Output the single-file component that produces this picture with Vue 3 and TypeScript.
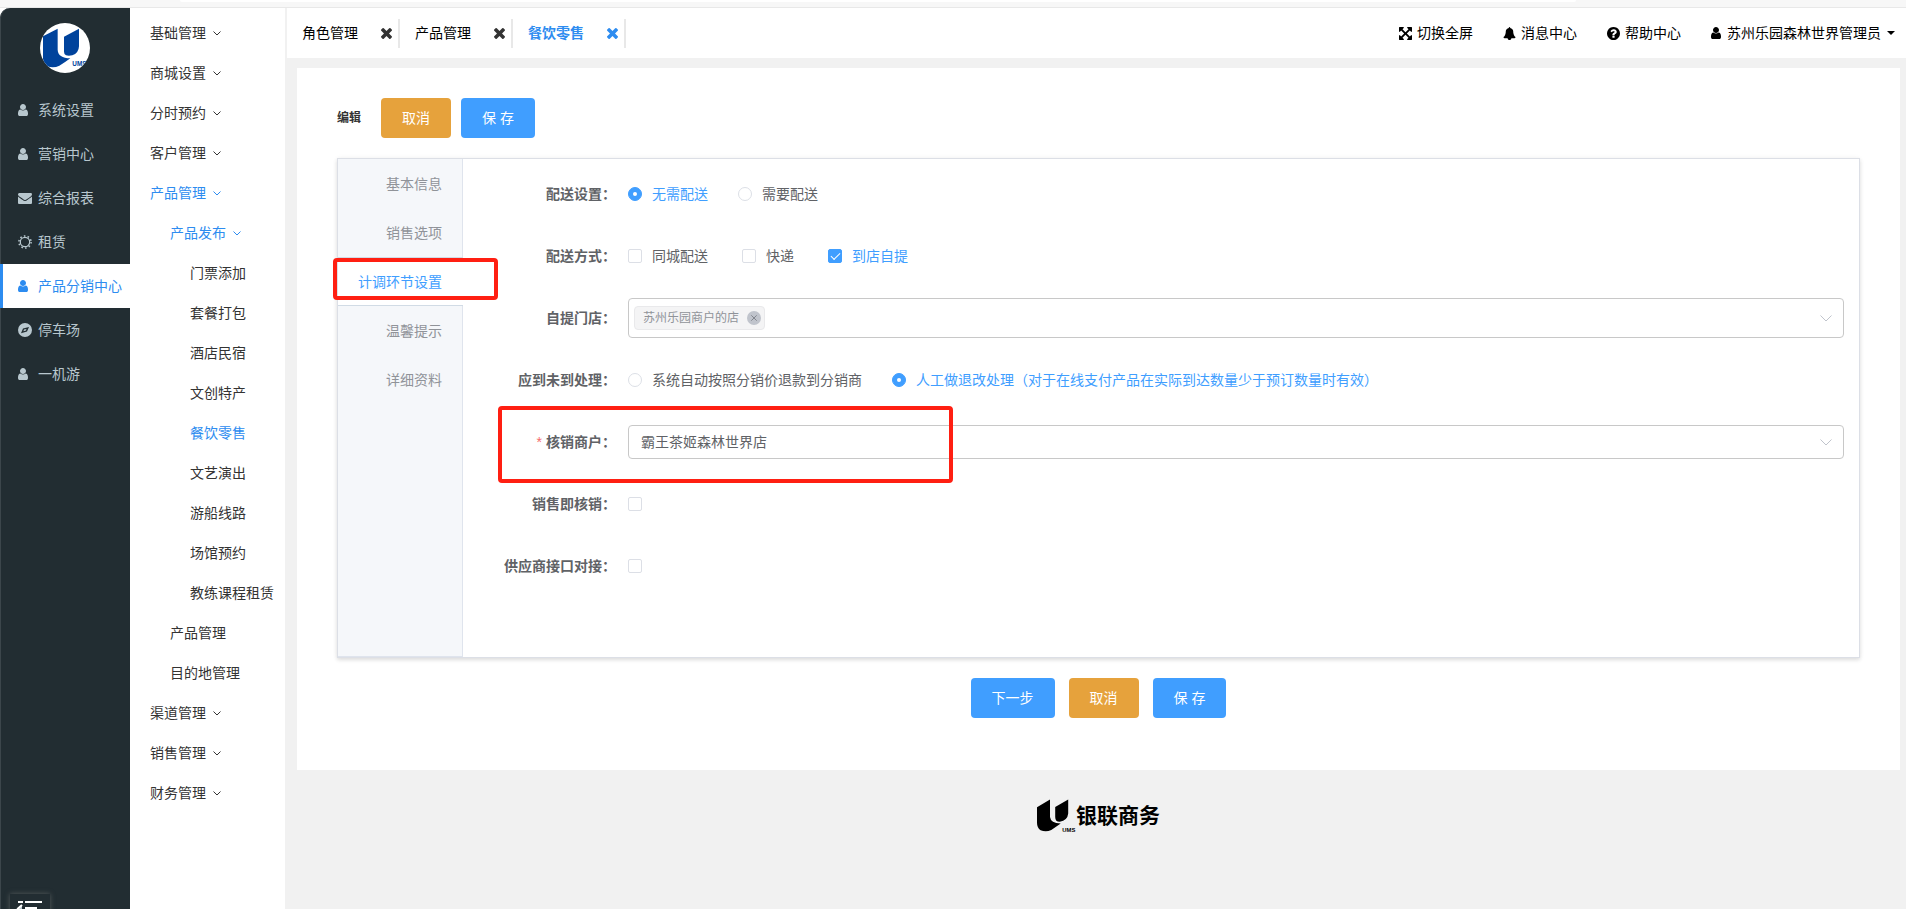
<script setup lang="ts">
import { ref } from 'vue'

interface MainItem { label: string; icon: 'user' | 'mail' | 'sun' | 'compass'; active?: boolean }
interface SubItem { label: string; level: 1 | 2 | 3; open?: boolean; active?: boolean }

const mainMenu: MainItem[] = [
  { label: '系统设置', icon: 'user' },
  { label: '营销中心', icon: 'user' },
  { label: '综合报表', icon: 'mail' },
  { label: '租赁', icon: 'sun' },
  { label: '产品分销中心', icon: 'user', active: true },
  { label: '停车场', icon: 'compass' },
  { label: '一机游', icon: 'user' },
]

const subMenu: SubItem[] = [
  { label: '基础管理', level: 1, open: true },
  { label: '商城设置', level: 1, open: true },
  { label: '分时预约', level: 1, open: true },
  { label: '客户管理', level: 1, open: true },
  { label: '产品管理', level: 1, open: true, active: true },
  { label: '产品发布', level: 2, open: true, active: true },
  { label: '门票添加', level: 3 },
  { label: '套餐打包', level: 3 },
  { label: '酒店民宿', level: 3 },
  { label: '文创特产', level: 3 },
  { label: '餐饮零售', level: 3, active: true },
  { label: '文艺演出', level: 3 },
  { label: '游船线路', level: 3 },
  { label: '场馆预约', level: 3 },
  { label: '教练课程租赁', level: 3 },
  { label: '产品管理', level: 2 },
  { label: '目的地管理', level: 2 },
  { label: '渠道管理', level: 1, open: true },
  { label: '销售管理', level: 1, open: true },
  { label: '财务管理', level: 1, open: true },
]

const pageTabs = ['角色管理', '产品管理', '餐饮零售']
const activePage = ref('餐饮零售')
const sections = ['基本信息', '销售选项', '计调环节设置', '温馨提示', '详细资料']
const activeSection = ref('计调环节设置')

const delivery = ref('none')
const methods = ref<string[]>(['到店自提'])
const methodOptions = ['同城配送', '快递', '到店自提']
const noShow = ref('manual')
const merchant = ref('霸王茶姬森林世界店')
const verifyOnSale = ref(false)
const supplierApi = ref(false)

const userPath = 'M1280 1399q0 109-62.5 187t-150.5 78h-854q-88 0-150.5-78t-62.5-187q0-85 8.5-160.5t31.5-152 58.5-131 94-89 134.5-34.5q131 128 313 128t313-128q76 0 134.5 34.5t94 89 58.5 131 31.5 152 8.5 160.5zm-256-887q0 159-112.5 271.5t-271.5 112.5-271.5-112.5-112.5-271.5 112.5-271.5 271.5-112.5 271.5 112.5 112.5 271.5z'
</script>

<template>
  <div class="app">
    <div class="chrome"><div class="address"></div></div>
    <div class="shell">
      <aside class="sidebar">
        <svg class="avatar" viewBox="0 0 150 150" role="img" aria-label="UMS">
          <defs><clipPath id="disc"><circle cx="75" cy="75" r="75" /></clipPath></defs>
          <g clip-path="url(#disc)">
            <rect width="150" height="150" fill="#fff" />
            <path fill="#00439c" d="M9 40 L53 17 V80 Q54 105 91 106 Q74 119 58 128 Q41 136 22 130 Q9 123 9 106Z M72 41 L117 17 V70 Q116 91 97 97 Q86 99 78 97 Q72 94 72 86Z" />
            <text x="97" y="130" font-size="19" font-weight="700" fill="#00439c" font-family="Liberation Sans, sans-serif">UMS</text>
          </g>
        </svg>
        <nav class="main-nav">
          <a v-for="item in mainMenu" :key="item.label" href="#" class="main-item" :class="{ active: item.active }">
            <svg v-if="item.icon === 'user'" class="ico-user" viewBox="0 128 1280 1536"><path :d="userPath" /></svg>
            <svg v-else-if="item.icon === 'mail'" class="ico" viewBox="0 0 1792 1792">
              <path d="M1792 710v794q0 66-47 113t-113 47h-1472q-66 0-113-47t-47-113v-794q44 49 101 87 362 246 497 345 57 42 92.5 65.5t94.5 48 110 24.5h2q51 0 110-24.5t94.5-48 92.5-65.5q170-123 498-345 57-39 100-87zm0-294q0 79-49 151t-122 123q-376 261-468 325-10 7-42.5 31t-54 38.5-52 32.5-57.5 27-50 9h-2q-23 0-50-9t-57.5-27-52-32.5-54-38.5-42.5-31q-91-64-262-182.5t-205-142.5q-62-42-117-115.5t-55-136.5q0-78 41.5-130t118.5-52h1472q65 0 112.5 47t47.5 113z" />
            </svg>
            <svg v-else-if="item.icon === 'sun'" class="ico" viewBox="0 0 14 14">
              <circle cx="7" cy="7" r="4.7" fill="none" stroke="currentColor" stroke-width="1.2" />
              <circle cx="7" cy="7" r="6.1" fill="none" stroke="currentColor" stroke-width="1.5" stroke-dasharray="1.6 2.232" />
            </svg>
            <svg v-else class="ico" viewBox="0 0 14 14">
              <path fill-rule="evenodd" d="M7 0a7 7 0 1 0 0 14a7 7 0 1 0 0-14z M11 4L9 8.4L3 10.2L5 5.6z M8.4 6L6 6.6L5.4 8.2L8 7.6z" />
            </svg>
            <span>{{ item.label }}</span>
          </a>
        </nav>
        <button class="collapse" type="button" aria-label="收起菜单">
          <svg viewBox="0 0 24 18" fill="none" stroke="#fff" stroke-width="2">
            <path d="M0 2h5M7 2h17M7 8h12M7 14h17M4 5L0 8.500l4 3.500" />
          </svg>
        </button>
      </aside>

      <nav class="sub-nav">
        <a v-for="(item, i) in subMenu" :key="i" href="#" class="sub-item" :class="['level-' + item.level, { active: item.active }]">
          {{ item.label }}
          <svg v-if="item.open" class="caret-thin" viewBox="0 0 8 5"><path d="M0.500 0.500L4 4L7.500 0.500" /></svg>
        </a>
      </nav>

      <div class="workspace">
        <header class="topbar">
          <div class="page-tabs">
            <div v-for="tab in pageTabs" :key="tab" class="page-tab" :class="{ active: tab === activePage }">
              <a href="#" @click.prevent="activePage = tab">{{ tab }}</a>
              <button type="button" :aria-label="'关闭' + tab">
                <svg viewBox="302 366 1188 1188"><path d="M1490 1322q0 40-28 68l-136 136q-28 28-68 28t-68-28l-294-294-294 294q-28 28-68 28t-68-28l-136-136q-28-28-28-68t28-68l294-294-294-294q-28-28-28-68t28-68l136-136q28-28 68-28t68 28l294 294 294-294q28-28 68-28t68 28l136 136q28 28 28 68t-28 68l-294 294 294 294q28 28 28 68z" /></svg>
              </button>
            </div>
          </div>
          <div class="tools">
            <a href="#">
              <svg class="tool-ico" viewBox="128 128 1536 1536"><path d="M1411 541l-355 355 355 355 144-144q29-31 70-14 39 17 39 59v448q0 26-19 45t-45 19h-448q-42 0-59-40-17-39 14-69l144-144-355-355-355 355 144 144q31 30 14 69-17 40-59 40h-448q-26 0-45-19t-19-45v-448q0-42 40-59 39-17 69 14l144 144 355-355-355-355-144 144q-19 19-45 19-12 0-24-5-40-17-40-59v-448q0-26 19-45t45-19h448q42 0 59 40 17 39-14 69l-144 144 355 355 355-355-144-144q-31-30-14-69 17-40 59-40h448q26 0 45 19t19 45v448q0 42-39 59-13 5-25 5-26 0-45-19z" /></svg>
              切换全屏
            </a>
            <a href="#">
              <svg class="tool-ico" viewBox="64 0 1664 1792"><path d="M1728 1408q0 52-38 90t-90 38h-448q0 106-75 181t-181 75-181-75-75-181h-448q-52 0-90-38t-38-90q50-42 91-88t85-119.500 74.500-158.500 50-206 19.500-260q0-152 117-282.500t307-158.500q-8-19-8-39 0-40 28-68t68-28 68 28 28 68q0 20-8 39 190 28 307 158.500t117 282.500q0 139 19.500 260t50 206 74.500 158.500 85 119.500 91 88z" /></svg>
              消息中心
            </a>
            <a href="#">
              <svg class="tool-ico" viewBox="128 128 1536 1536"><path d="M1024 1376v-192q0-14-9-23t-23-9h-192q-14 0-23 9t-9 23v192q0 14 9 23t23 9h192q14 0 23-9t9-23zm256-672q0-88-55.500-163t-138.500-116-170-41q-243 0-371 213-15 24 8 42l132 100q7 6 19 6 16 0 25-12 53-68 86-92 34-24 86-24 48 0 85.500 26t37.500 59q0 38-20 61t-68 45q-63 28-115.500 86.500t-52.500 125.500v36q0 14 9 23t23 9h192q14 0 23-9t9-23q0-19 21.500-49.500t54.500-49.500q32-18 49-28.500t46-35 44.500-48 28-60.500 12.500-81zm384 192q0 209-103 385.500t-279.500 279.500-385.500 103-385.500-103-279.500-279.500-103-385.500 103-385.500 279.500-279.500 385.500-103 385.500 103 279.500 279.500 103 385.500z" /></svg>
              帮助中心
            </a>
            <a href="#" class="account">
              <svg class="ico-user" viewBox="0 128 1280 1536"><path :d="userPath" /></svg>
              苏州乐园森林世界管理员
              <svg class="caret-solid" viewBox="0 0 8 4"><path d="M0 0h8L4 4z" /></svg>
            </a>
          </div>
        </header>

        <main class="card">
          <div class="heading">
            <h1>编辑</h1>
            <button type="button" class="btn warn">取消</button>
            <button type="button" class="btn primary">保 存</button>
          </div>

          <div class="panel">
            <div class="section-nav" role="tablist">
              <div v-for="s in sections" :key="s" class="section-slot">
                <button type="button" role="tab" class="section" :class="{ active: s === activeSection }" :aria-selected="s === activeSection" @click="activeSection = s">{{ s }}</button>
                <span v-if="s === '计调环节设置'" class="mark mark-tab"></span>
              </div>
            </div>

            <form class="form" @submit.prevent>
              <div class="row">
                <span class="label">配送设置：</span>
                <div class="options">
                  <label class="opt"><input v-model="delivery" type="radio" name="delivery" value="none" /><span>无需配送</span></label>
                  <label class="opt"><input v-model="delivery" type="radio" name="delivery" value="need" /><span>需要配送</span></label>
                </div>
              </div>
              <div class="row">
                <span class="label">配送方式：</span>
                <div class="options wide">
                  <label v-for="m in methodOptions" :key="m" class="opt"><input v-model="methods" type="checkbox" :value="m" /><span>{{ m }}</span></label>
                </div>
              </div>
              <div class="row">
                <label class="label" for="stores">自提门店：</label>
                <div class="multi">
                  <span class="tag">苏州乐园商户的店
                    <button type="button" aria-label="移除">
                      <svg viewBox="0 0 14 14"><circle cx="7" cy="7" r="7" fill="#c0c4cc" /><path d="M4.300 4.300l5.400 5.400M9.700 4.300l-5.400 5.400" stroke="#82868e" fill="none" /></svg>
                    </button>
                  </span>
                  <input id="stores" type="text" role="combobox" aria-expanded="false" />
                  <svg class="arrow" viewBox="0 0 12 7"><path d="M0.500 0.500L6 6L11.500 0.500" /></svg>
                </div>
              </div>
              <div class="row">
                <span class="label">应到未到处理：</span>
                <div class="options">
                  <label class="opt"><input v-model="noShow" type="radio" name="noshow" value="auto" /><span>系统自动按照分销价退款到分销商</span></label>
                  <label class="opt"><input v-model="noShow" type="radio" name="noshow" value="manual" /><span>人工做退改处理（对于在线支付产品在实际到达数量少于预订数量时有效）</span></label>
                </div>
              </div>
              <div class="row">
                <label class="label" for="merchant"><i>*</i>核销商户：</label>
                <div class="single">
                  <select id="merchant" v-model="merchant"><option>霸王茶姬森林世界店</option></select>
                  <svg class="arrow" viewBox="0 0 12 7"><path d="M0.500 0.500L6 6L11.500 0.500" /></svg>
                </div>
                <span class="mark mark-row"></span>
              </div>
              <div class="row">
                <label class="label" for="verify">销售即核销：</label>
                <div class="options"><input id="verify" v-model="verifyOnSale" type="checkbox" /></div>
              </div>
              <div class="row">
                <label class="label" for="api">供应商接口对接：</label>
                <div class="options"><input id="api" v-model="supplierApi" type="checkbox" /></div>
              </div>
            </form>
          </div>

          <div class="actions">
            <button type="button" class="btn primary">下一步</button>
            <button type="button" class="btn warn">取消</button>
            <button type="button" class="btn primary">保 存</button>
          </div>
        </main>

        <footer class="footer">
          <svg viewBox="0 0 120 102" role="img" aria-label="UMS">
            <path d="M0 24L40 0V54Q42 73 73 74L44 94Q28 102 11 95Q0 88 0 72Z M56 23L96 0V43Q94 64 70 69Q56 69 56 54Z" />
            <text x="78" y="99" font-size="18" font-weight="700" font-family="Liberation Sans, sans-serif">UMS</text>
          </svg>
          <strong>银联商务</strong>
        </footer>
      </div>
    </div>
  </div>
</template>

<style>
body { margin: 0; overflow: hidden; background: #f1f1f1; }
</style>

<style scoped>
* { box-sizing: border-box; }
.app {
  display: flex; flex-direction: column; height: 100vh; overflow: hidden; color: #333;
  font: 14px/20px "Liberation Sans", "Noto Sans CJK SC", sans-serif;
}
a { color: inherit; text-decoration: none; }
button { font: inherit; border: 0; padding: 0; background: none; color: inherit; cursor: pointer; }
svg { display: block; flex: none; fill: currentColor; overflow: visible; }
.chrome { flex: none; height: 8px; padding: 0 330px 0 180px; background: #f7f7f7; border-bottom: 1px solid #e8e8e8; }
.address { height: 2px; background: #fff; border-radius: 0 0 8px 8px; }
.shell { flex: 1; min-height: 0; display: flex; background: #fff; }

.sidebar {
  flex: none; width: 130px; display: flex; flex-direction: column; overflow: hidden;
  background: #222d32; border-top-left-radius: 10px; color: #b8c7ce; box-shadow: inset 1px 0 #3c464b;
}
.avatar { width: 50px; height: 50px; margin: 15px auto; }
.main-item {
  display: flex; align-items: center; gap: 6px; height: 44px; padding-left: 15px;
  border-left: 3px solid transparent; white-space: nowrap;
}
.main-item.active { background: #fff; color: #2d8cf0; border-left-color: #2d8cf0; }
.ico { width: 14px; height: 14px; }
.ico-user { width: 10px; height: 12px; }
.main-item .ico-user { margin-right: 4px; }
.collapse {
  flex: none; width: 40px; height: 40px; margin: auto 0 -25px 10px; padding: 6px 8px;
  display: flex; align-items: flex-start; background: #222d32; box-shadow: 0 0 5px #555b5c;
}
.collapse svg { width: 24px; height: 18px; }

.sub-nav { flex: none; width: 157px; padding-top: 5px; border-right: 2px solid #f1f1f1; overflow: hidden; }
.sub-item { display: flex; align-items: center; gap: 7px; height: 40px; padding-left: 20px; white-space: nowrap; }
.level-2 { padding-left: 40px; }
.level-3 { padding-left: 60px; }
.sub-item.active { color: #2d8cf0; }
.caret-thin { width: 8px; height: 5px; fill: none; stroke: currentColor; }

.workspace { flex: 1; min-width: 0; background: #f1f1f1; }
.topbar { display: flex; justify-content: space-between; align-items: center; height: 50px; padding-right: 11px; background: #fff; color: #000; }
.page-tabs { display: flex; }
.page-tab {
  display: flex; align-items: center; justify-content: space-between; width: 113px; height: 29px;
  padding: 0 6px 0 15px; border-right: 2px solid #e8e8e8;
}
.page-tab button { color: #333; }
.page-tab svg { width: 11px; height: 11px; }
.page-tab.active { font-weight: 700; }
.page-tab.active, .page-tab.active button { color: #2d8cf0; }
.tools { display: flex; gap: 30px; }
.tools a { display: flex; align-items: center; gap: 5px; white-space: nowrap; }
.tools .account { gap: 6px; }
.tool-ico { width: 13px; height: 13px; }
.caret-solid { width: 8px; height: 4px; }

.card { margin: 10px 6px 0 10px; padding: 30px 40px 52px; background: #fff; }
.heading { display: flex; align-items: center; gap: 10px; margin-bottom: 20px; }
h1 { margin: 0 10px 0 0; font-size: 12px; line-height: 20px; font-weight: 700; }
.btn { height: 40px; padding: 0 21px; border-radius: 4px; color: #fff; white-space: nowrap; }
.primary { background: #409eff; }
.warn { background: #e6a23c; }
.actions { display: flex; justify-content: center; gap: 14px; margin-top: 20px; }

.panel {
  display: flex; min-height: 500px; border: 1px solid #dcdfe6; background: #fff;
  box-shadow: 0 2px 4px rgba(0, 0, 0, 0.12), 0 0 6px rgba(0, 0, 0, 0.04);
}
.section-nav { flex: none; width: 125px; background: #f5f7fa; border-right: 1px solid #dfe4ed; border-bottom: 1px solid #dfe4ed; }
.section-slot { position: relative; height: 49px; margin-right: -1px; }
.section {
  display: block; width: 100%; height: 49px; padding-right: 21px; text-align: right; color: #909399;
  border: solid transparent; border-width: 1px 0;
}
.section.active { background: #fff; color: #409eff; border-color: #d1dbe5; }
.mark { position: absolute; border: 4px solid #ff1f12; border-radius: 4px; pointer-events: none; z-index: 1; }
.mark-tab { left: -5px; right: -35px; top: 1px; height: 42px; }
.mark-row { left: 20px; width: 455px; top: -16px; height: 77px; }

.form { flex: 1; min-width: 0; padding: 15px; color: #606266; }
.row { position: relative; display: flex; align-items: center; height: 40px; margin-bottom: 22px; }
.label { flex: none; width: 150px; padding-right: 12px; text-align: right; font-weight: 700; white-space: nowrap; }
.label i { margin-right: 4px; color: #f56c6c; font-style: normal; font-weight: 400; }
.options { display: flex; gap: 30px; }
.options.wide { gap: 34px; }
.opt { display: flex; align-items: center; gap: 10px; white-space: nowrap; }
.opt:has(input:checked) { color: #409eff; }
.options input {
  appearance: none; flex: none; width: 14px; height: 14px; margin: 0; border: 1px solid #dcdfe6; background: #fff;
  display: grid; place-items: center;
}
input[type="radio"] { border-radius: 50%; }
input[type="checkbox"] { border-radius: 2px; }
.options input:checked { background: #409eff; border-color: #409eff; }
input[type="radio"]:checked::before { content: ""; width: 4px; height: 4px; border-radius: 50%; background: #fff; }
input[type="checkbox"]:checked::before {
  content: ""; width: 4px; height: 8px; border: solid #fff; border-width: 0 1px 1px 0; transform: rotate(45deg) translate(-1px, -1px);
}
.multi, .single { flex: 1; min-width: 0; display: flex; align-items: center; border: 1px solid #c8c8c8; border-radius: 4px; padding-right: 11px; }
.multi { height: 40px; padding-left: 5px; }
.single { height: 34px; }
.multi input, .single select { flex: 1; min-width: 0; height: 100%; border: 0; outline: 0; background: none; color: #606266; font: inherit; }
.single select { appearance: none; padding: 0 12px; }
.arrow { width: 12px; height: 7px; fill: none; stroke: #c0c4cc; }
.tag {
  display: flex; align-items: center; gap: 8px; height: 24px; padding: 0 3px 0 8px; font-size: 12px; color: #909399;
  background: #f4f4f5; border: 1px solid #e9e9eb; border-radius: 4px; white-space: nowrap;
}
.tag svg { width: 14px; height: 14px; }

.footer { display: flex; justify-content: center; align-items: center; padding: 29px 6px 0 10px; color: #000; }
.footer svg { width: 39px; height: 34px; }
.footer strong { font-size: 21px; line-height: 32px; font-weight: 700; }
</style>
